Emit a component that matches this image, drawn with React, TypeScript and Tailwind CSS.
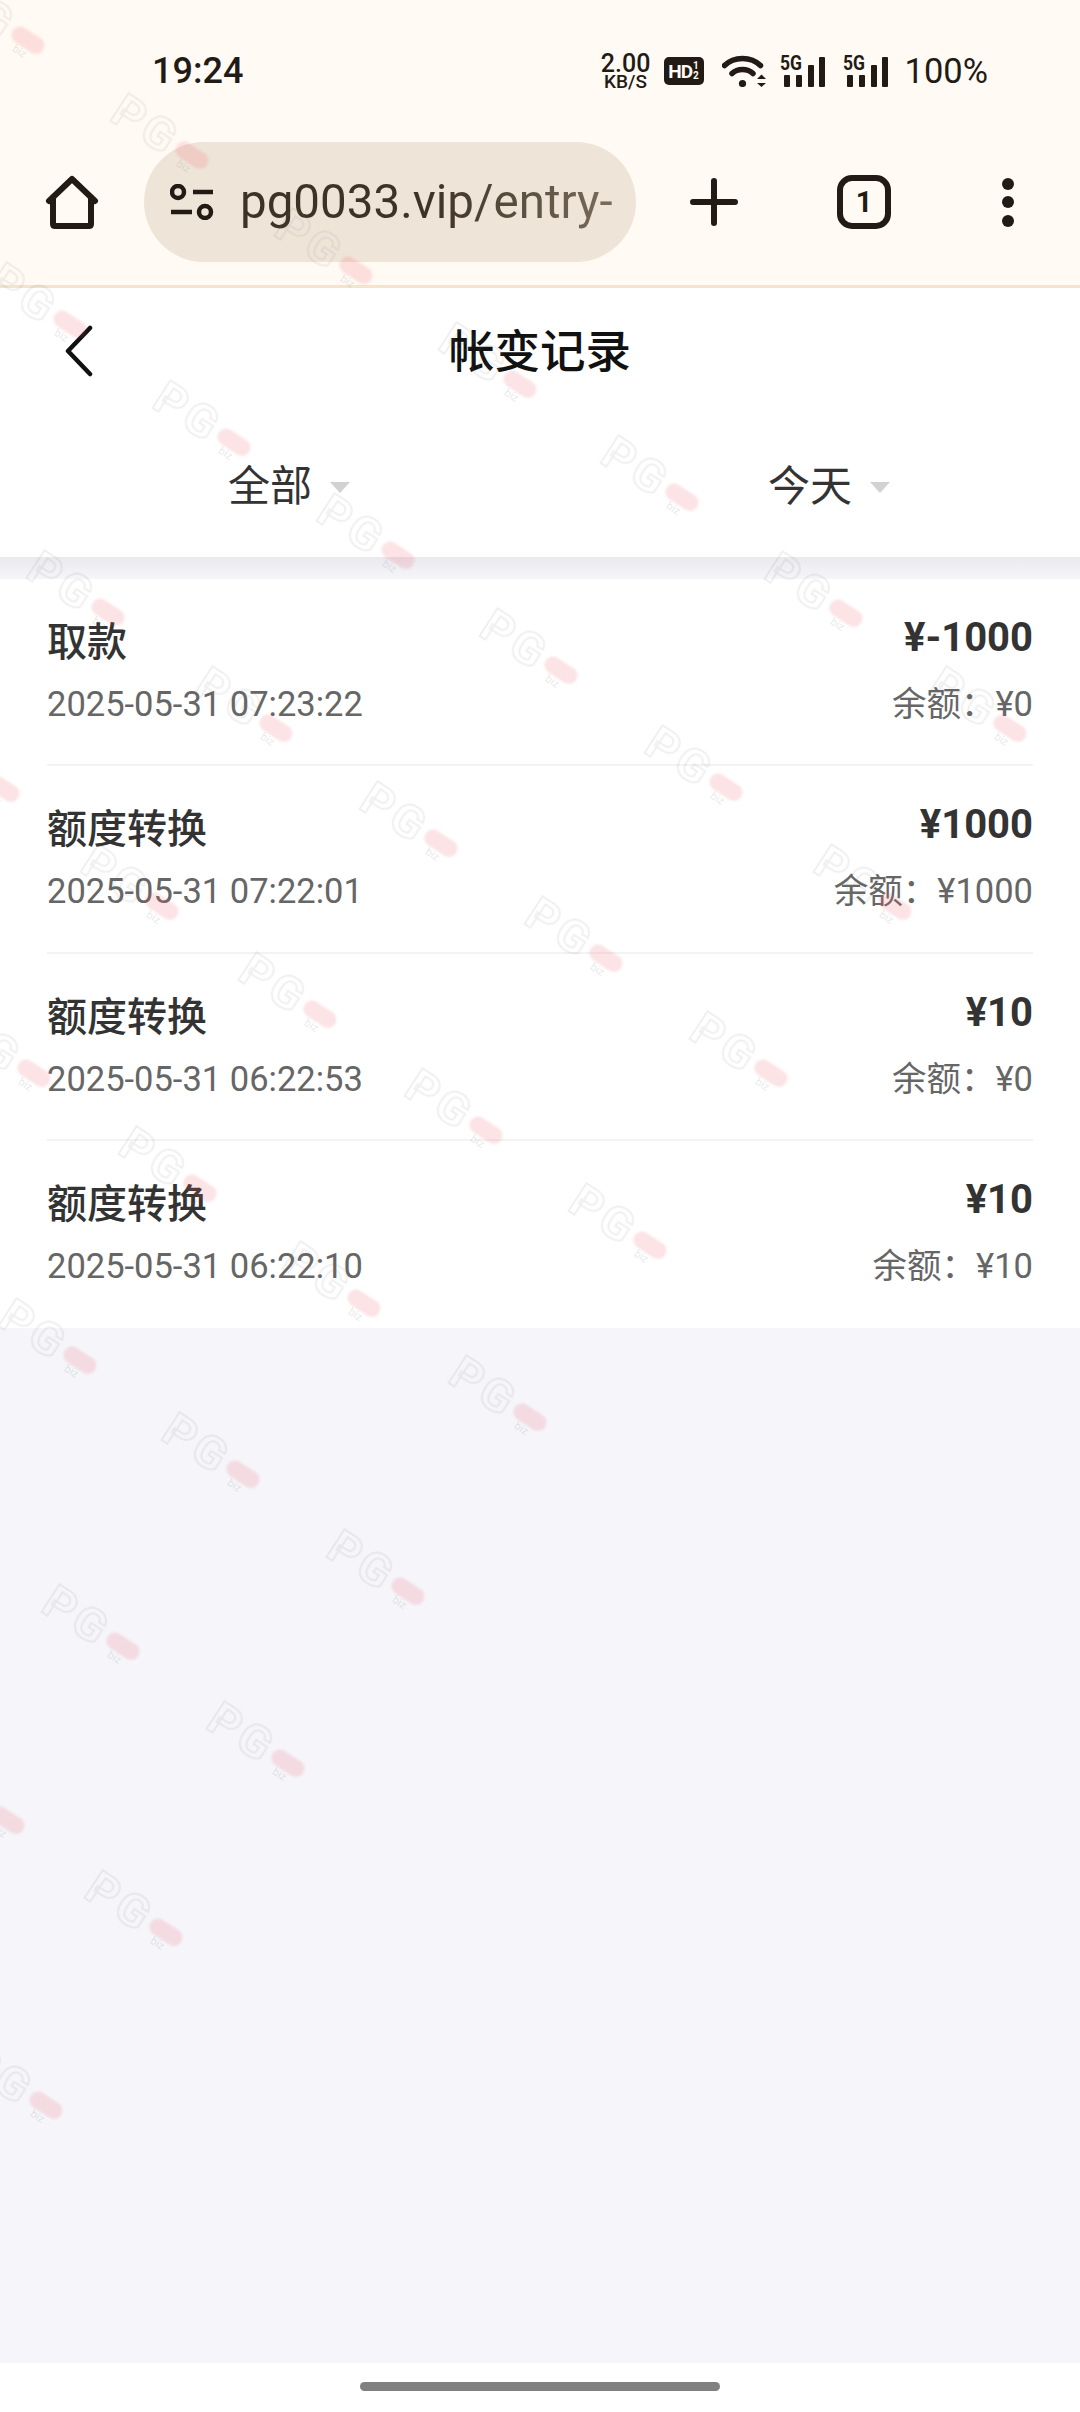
import React from 'react';

const pills = [
  [28, 40], [192, 155], [356, 270], [70, 324], [234, 442], [520, 384], [682, 497], [398, 555],
  [108, 612], [846, 613], [561, 670], [276, 728], [1010, 728], [726, 787], [441, 843], [3, 788],
  [162, 906], [895, 906], [606, 958], [320, 1014], [34, 1073], [771, 1073], [486, 1130], [200, 1188],
  [650, 1245], [364, 1303], [80, 1360], [530, 1417], [243, 1474], [408, 1591], [123, 1646],
  [288, 1763], [8, 1820], [166, 1932], [46, 2105],
];

const records = [
  { title: '取款', time: '2025-05-31 07:23:22', amount: '¥-1000', balance: '¥0' },
  { title: '额度转换', time: '2025-05-31 07:22:01', amount: '¥1000', balance: '¥1000' },
  { title: '额度转换', time: '2025-05-31 06:22:53', amount: '¥10', balance: '¥0' },
  { title: '额度转换', time: '2025-05-31 06:22:10', amount: '¥10', balance: '¥10' },
];

function Watermark({ x, y }: { x: number; y: number }) {
  // box is 120 wide with the pill's centre 18px left of its right edge
  const left = x - 60 - 42 * Math.cos((33 * Math.PI) / 180);
  const top = y - 25 - 42 * Math.sin((33 * Math.PI) / 180);
  return (
    <div
      className="absolute w-[120px] h-[50px] rotate-[33deg] flex items-center pl-[12px]"
      style={{ left, top }}
    >
      <span className="text-[47px] leading-[50px] font-bold tracking-[4px] text-transparent blur-[0.5px] [-webkit-text-stroke:2px_rgba(120,120,120,0.11)]">
        PG
      </span>
      <span className="absolute right-0 top-[17px] w-[36px] h-[17px] rounded-full blur-[1px] bg-[rgba(238,90,100,0.17)]" />
      <span className="absolute right-[12px] top-[33px] text-[11px] leading-[14px] text-[rgba(120,120,120,0.18)]">
        biz
      </span>
    </div>
  );
}

function Signal() {
  return (
    <svg width="46" height="32" viewBox="0 0 46 32" className="block">
      <text x="0" y="15" fontSize="21" fontWeight="700" fill="#221a15" textLength="22" lengthAdjust="spacingAndGlyphs">
        5G
      </text>
      <rect x="4" y="20" width="6" height="12" rx="1" fill="#221a15" />
      <rect x="16" y="20" width="6" height="12" rx="1" fill="#221a15" />
      <rect x="28" y="10" width="6" height="22" rx="1" fill="#221a15" />
      <rect x="39" y="2" width="6" height="30" rx="1" fill="#221a15" />
    </svg>
  );
}

export default function App() {
  return (
    <div className="relative h-[2412px] w-[1080px] overflow-hidden flex flex-col bg-white font-['Roboto','Noto_Sans_CJK_SC',sans-serif]">
      {/* status bar */}
      <div className="h-[142px] shrink-0 bg-[#fffaf4] flex items-center pl-[152px] pr-[92px] text-[#221a15]">
        <span className="text-[36px] font-medium leading-none">19:24</span>
        <div className="ml-auto flex items-center">
          <div className="w-[50px] flex flex-col items-center font-medium">
            <span className="text-[25px] leading-[21px]">2.00</span>
            <span className="text-[19px] leading-[16px]">KB/S</span>
          </div>
          <div className="ml-[13px] w-[40px] h-[28px] rounded-[5px] bg-[#221a15] text-[#fffaf4] flex items-center justify-center">
            <span className="text-[19px] font-bold leading-none tracking-[-1px]">HD</span>
            <span className="flex flex-col text-[10px] font-bold leading-[10px] ml-[1px]">
              <span>1</span>
              <span>2</span>
            </span>
          </div>
          <svg width="44" height="32" viewBox="0 0 44 32" className="ml-[18px] block">
            <path d="M2.5 10.5C12 1 29 1 38.5 10.5" fill="none" stroke="#221a15" strokeWidth="5.5" strokeLinecap="round" />
            <path d="M10 18.5C15.5 13 25.5 13 31 18.5" fill="none" stroke="#221a15" strokeWidth="5.5" strokeLinecap="round" />
            <circle cx="20.5" cy="28.5" r="3.6" fill="#221a15" />
            <path d="M35 24L39.5 19.5L44 24Z" fill="#221a15" />
            <path d="M35 28H44L39.5 32Z" fill="#221a15" />
          </svg>
          <div className="ml-[14px]">
            <Signal />
          </div>
          <div className="ml-[17px]">
            <Signal />
          </div>
          <span className="ml-[16px] text-[34.5px] leading-none">100%</span>
        </div>
      </div>

      {/* browser toolbar */}
      <div className="h-[146px] shrink-0 bg-[#fffaf4] border-b-[3px] border-[#f3e3cf] flex items-start">
        <div className="w-[144px] h-[120px] flex items-center justify-center">
          <svg width="60" height="60" viewBox="0 0 60 60" className="block">
            <path
              d="M7 29L30 7L53 29M11 25V52Q11 54 13 54H47Q49 54 49 52V25"
              fill="none"
              stroke="#221a15"
              strokeWidth="6"
              strokeLinecap="round"
              strokeLinejoin="round"
            />
          </svg>
        </div>
        <div className="w-[492px] h-[120px] rounded-[60px] bg-[#efe4d8] flex items-center pl-[26px] overflow-hidden">
          <svg width="44" height="36" viewBox="0 0 44 36" className="block shrink-0">
            <circle cx="8" cy="8" r="6" fill="none" stroke="#221a15" strokeWidth="4.5" />
            <circle cx="35" cy="28" r="6" fill="none" stroke="#221a15" strokeWidth="4.5" />
            <path d="M23 8H43M1 28H22" fill="none" stroke="#221a15" strokeWidth="4.5" />
          </svg>
          <span className="ml-[26px] text-[47.5px] leading-[56px] whitespace-nowrap bg-gradient-to-r from-[#3d3226] from-50% to-[#7a6d5c] bg-clip-text text-transparent">
            pg0033.vip/entry-
          </span>
        </div>
        <div className="w-[156px] h-[120px] flex items-center justify-center">
          <svg width="48" height="48" viewBox="0 0 48 48" className="block">
            <path d="M24 3V45M3 24H45" fill="none" stroke="#221a15" strokeWidth="6" strokeLinecap="round" />
          </svg>
        </div>
        <div className="w-[54px] h-[120px] ml-[45px] flex items-center justify-center">
          <div className="w-[54px] h-[54px] shrink-0 rounded-[15px] border-[6px] border-[#221a15] flex items-center justify-center text-[29px] font-bold leading-none text-[#221a15]">
            1
          </div>
        </div>
        <div className="ml-[111px] w-[12px] h-[120px] flex flex-col items-center justify-center gap-[6.5px]">
          <span className="w-[12px] h-[12px] rounded-full bg-[#221a15]" />
          <span className="w-[12px] h-[12px] rounded-full bg-[#221a15]" />
          <span className="w-[12px] h-[12px] rounded-full bg-[#221a15]" />
        </div>
      </div>

      {/* page header */}
      <div className="h-[123px] shrink-0 relative flex items-center justify-center">
        <svg width="32" height="52" viewBox="0 0 32 52" className="absolute left-[63px] top-[37px] block">
          <path d="M27 3L5 26L27 49" fill="none" stroke="#111111" strokeWidth="4.5" strokeLinecap="round" strokeLinejoin="round" />
        </svg>
        <span className="text-[45.5px] font-medium leading-none text-[#111111] translate-y-[3px]">帐变记录</span>
      </div>

      {/* filters */}
      <div className="h-[146px] shrink-0 grid grid-cols-2 items-center text-[#333333]">
        {['全部', '今天'].map((label) => (
          <div key={label} className="flex justify-center">
            <span className="relative text-[42px] leading-none translate-y-[3px]">
              {label}
              <span className="absolute left-full ml-[18px] top-[16px] w-0 h-0 border-x-[10.5px] border-x-transparent border-t-[11px] border-t-[#d2d2d2]" />
            </span>
          </div>
        ))}
      </div>
      <div className="h-[22px] shrink-0 bg-gradient-to-b from-[#e9e9ee] to-[#f5f5fa]" />

      {/* records */}
      <div className="shrink-0 bg-white">
        {records.map((r, i) => (
          <div key={i} className="h-[187.25px] mx-[47px] flex justify-between border-b-2 border-[#f3f3f3] last:border-b-0">
            <div className="flex flex-col pt-[40px]">
              <span className="text-[40px] font-medium leading-[48px] text-[#333333]">{r.title}</span>
              <span className="mt-[19px] text-[34.5px] leading-[36px] text-[#666666]">{r.time}</span>
            </div>
            <div className="flex flex-col items-end pt-[35px]">
              <span className="text-[40px] font-bold leading-[48px] text-[#333333]">{r.amount}</span>
              <span className="mt-[24px] text-[34.5px] leading-[36px] text-[#666666]">余额：{r.balance}</span>
            </div>
          </div>
        ))}
      </div>

      <div className="flex-1 bg-[#f5f5fa]" />

      {/* gesture bar */}
      <div className="h-[49px] shrink-0 bg-white flex justify-center pt-[19px]">
        <div className="w-[360px] h-[9px] rounded-full bg-[#808080]" />
      </div>

      {/* repeated site watermark, sits over everything */}
      <div className="absolute inset-0 pointer-events-none">
        {pills.map(([x, y]) => (
          <Watermark key={`${x}-${y}`} x={x} y={y} />
        ))}
      </div>
    </div>
  );
}
